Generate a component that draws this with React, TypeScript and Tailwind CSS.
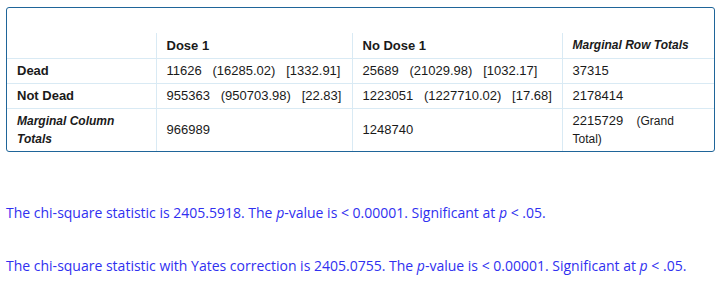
import React from "react";

const cell = "border border-[#d9eaf4] px-[10px] align-middle";

export default function App() {
  return (
    <div className="w-[721px] h-[290px] bg-white" style={{ fontFamily: '"Liberation Sans", Arial, sans-serif' }}>
      <div className="pl-[6px] pt-[7px]">
        <div className="w-[709px] border border-[#1f6599] rounded-[3px] overflow-hidden text-[13px] text-[#1a1a1a]">
          <div className="h-[25px]" />
          <table className="w-[707px] table-fixed border-collapse border-hidden">
            <colgroup>
              <col className="w-[149px]" />
              <col className="w-[196px]" />
              <col className="w-[210px]" />
              <col className="w-[152px]" />
            </colgroup>
            <tbody>
              <tr className="h-[25px]">
                <td className={cell}></td>
                <td className={`${cell} font-bold`}>Dose 1</td>
                <td className={`${cell} font-bold`}>No Dose 1</td>
                <td className={`${cell} font-bold italic text-[12px]`}>Marginal Row Totals</td>
              </tr>
              <tr className="h-[25px]">
                <td className={`${cell} font-bold`}>Dead</td>
                <td className={`${cell} whitespace-pre`}>{"11626   (16285.02)   [1332.91]"}</td>
                <td className={`${cell} whitespace-pre`}>{"25689   (21029.98)   [1032.17]"}</td>
                <td className={cell}>37315</td>
              </tr>
              <tr className="h-[25px]">
                <td className={`${cell} font-bold`}>Not Dead</td>
                <td className={`${cell} whitespace-pre`}>{"955363   (950703.98)   [22.83]"}</td>
                <td className={`${cell} whitespace-pre`}>{"1223051   (1227710.02)   [17.68]"}</td>
                <td className={cell}>2178414</td>
              </tr>
              <tr className="h-[43px]">
                <td className={`${cell} font-bold italic text-[12px] leading-[18px]`}>Marginal Column Totals</td>
                <td className={cell}>966989</td>
                <td className={cell}>1248740</td>
                <td className={`${cell} leading-[18px]`}>
                  2215729<span className="text-[12px]">{"\u00a0\u00a0\u00a0\u00a0"}(Grand Total)</span>
                </td>
              </tr>
            </tbody>
          </table>
        </div>
      </div>
      <div className="pl-[6px] text-[14px] text-[#3030f0]" style={{ fontFamily: '"Open Sans", sans-serif' }}>
        <p className="mt-[51px] leading-[20px]">
          The chi-square statistic is 2405.5918. The <i>p</i>-value is &lt; 0.00001. Significant at <i>p</i> &lt; .05.
        </p>
        <p className="mt-[33px] leading-[20px]">
          The chi-square statistic with Yates correction is 2405.0755. The <i>p</i>-value is &lt; 0.00001. Significant at <i>p</i> &lt; .05.
        </p>
      </div>
    </div>
  );
}
